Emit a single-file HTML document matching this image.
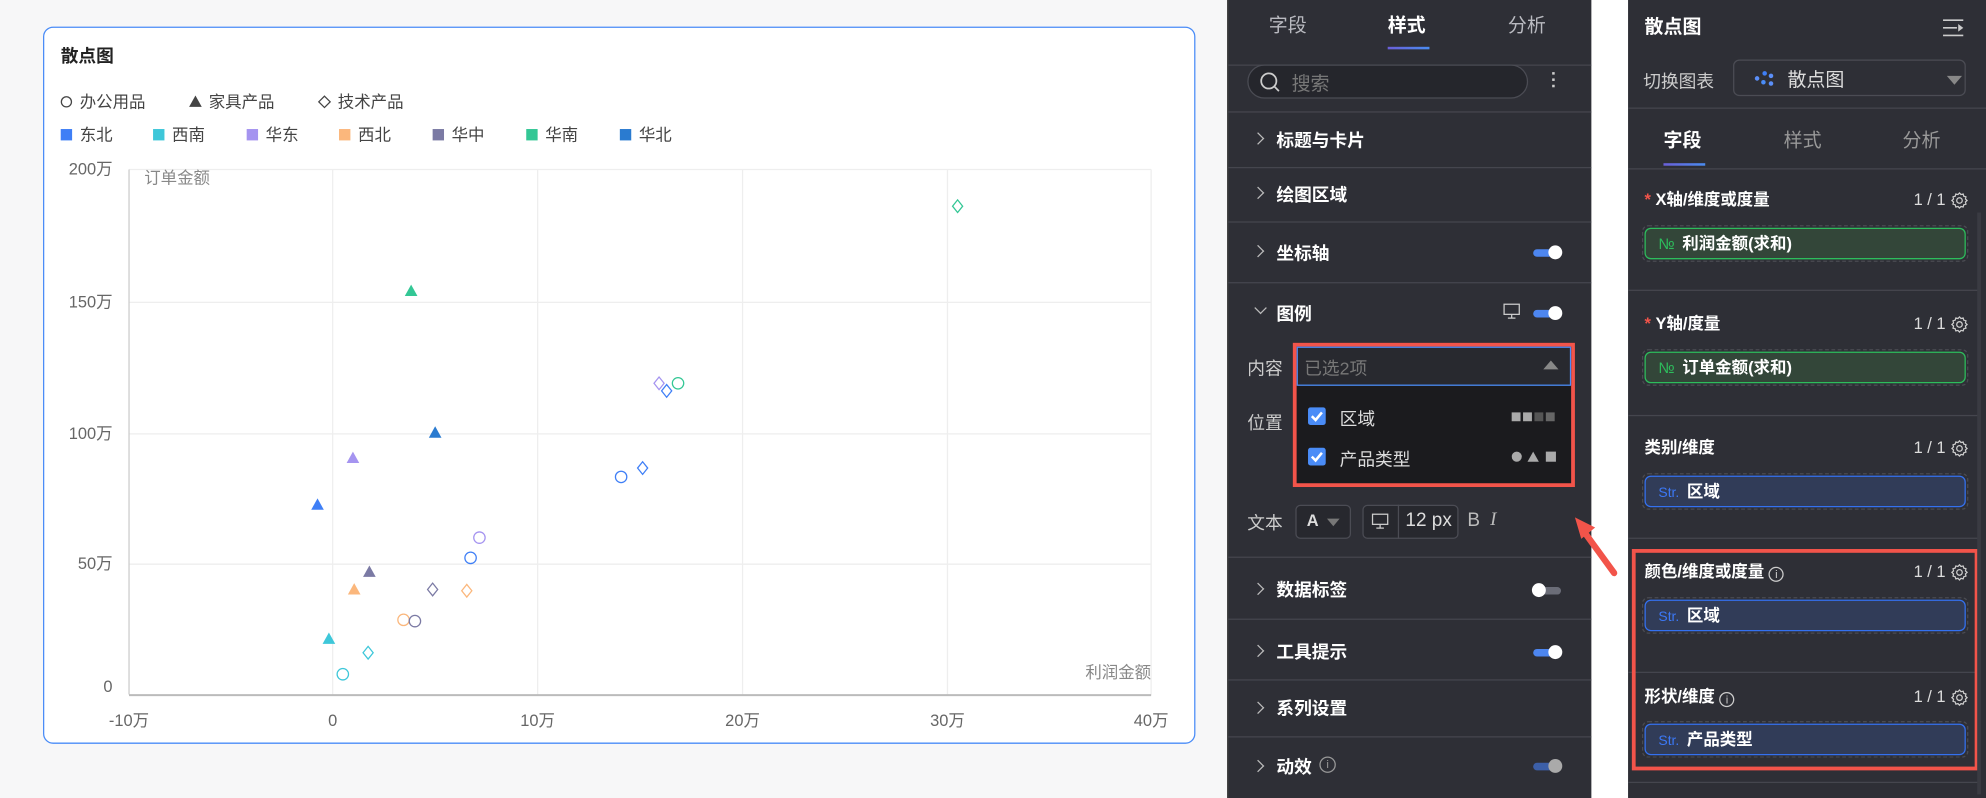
<!DOCTYPE html>
<html><head><meta charset="utf-8">
<style>
*{box-sizing:border-box;margin:0;padding:0}
html,body{width:1986px;height:798px;overflow:hidden;background:#fff}
body{font-family:"Liberation Sans","Noto Sans CJK SC",sans-serif}
#w{position:absolute;left:0;top:0;width:1570px;height:631px;transform:scale(1.265);transform-origin:0 0}
.a{position:absolute}
.lt{background:#f7f7f8;left:0;top:0;width:970px;height:631px}
.card{left:34px;top:21px;width:911px;height:567px;background:#fff;border:1px solid #4a8cf7;border-radius:8px}
.t{color:#222;font-size:14px;font-weight:bold}
.lg{font-size:13px;color:#444;white-space:nowrap}
.sq{display:inline-block;width:9px;height:9px;margin-right:6px;vertical-align:0}
.mid{left:970px;top:0;width:288px;height:631px;background:#2e2f36;border-left:1px solid #444}
.rt{left:1287px;top:0;width:283px;height:631px;background:#2e2f36}
.hl{position:absolute;left:0;right:0;height:1px;background:#45464e}
.wt{color:#fff;font-size:14px;font-weight:bold}
.gt{color:#b9bac0;font-size:14px}
.chev{position:absolute;left:20px;width:7px;height:7px;border-right:1.3px solid #bbb;border-top:1.3px solid #bbb;transform:rotate(45deg)}
.tg{position:absolute;width:22px;height:6px;border-radius:3px;background:#4d86f0}
.tg i{position:absolute;right:-1px;top:-3px;width:11px;height:11px;border-radius:50%;background:#fff}
.fb{position:absolute;left:11px;width:258px;height:29px;border:1px dashed #4a4b52;border-radius:5px}
.fb div{position:absolute;left:1px;top:1px;right:1px;bottom:1px;border-radius:5px;font-size:13px;color:#fff;padding-left:10px;line-height:24px;font-weight:bold}
.g{background:#334639;border:1px solid #2dbd5c}
.b{background:#313c58;border:1px solid #3471f0}
.st{color:#3c78f5;font-size:11px;font-weight:normal;margin-right:6px}
.no{color:#2dbd5c;font-size:12px;font-weight:normal;margin-right:6px}
.hd{position:absolute;left:13px;right:14px;height:18px;line-height:18px;font-size:13px;color:#fff;font-weight:bold}
.hd .r{position:absolute;right:18px;top:0;font-weight:normal;color:#ddd}
.hd svg{position:absolute;right:0;top:2px}
</style></head><body>
<div id="w">
<div class="a lt"></div>
<div class="a card">
 <div class="a t" style="left:13px;top:12px">散点图</div>
 <div class="a lg" style="left:13px;top:48px"><span style="display:inline-block;width:9px;height:9px;border:1px solid #444;border-radius:50%;margin-right:6px"></span>办公用品</div>
 <div class="a lg" style="left:114px;top:48px"><svg width="11" height="10" style="margin-right:5px"><path d="M5.5 0.5l5 9h-10z" fill="#444"/></svg>家具产品</div>
 <div class="a lg" style="left:216px;top:48px"><svg width="11" height="11" style="margin-right:5px;vertical-align:-1px"><path d="M5.5 1l4.5 4.5-4.5 4.5-4.5-4.5z" fill="none" stroke="#444"/></svg>技术产品</div>
 <div class="a lg" style="left:13px;top:74px"><span class="sq" style="background:#3f7ff6"></span>东北</div>
 <div class="a lg" style="left:86px;top:74px"><span class="sq" style="background:#3ec7d9"></span>西南</div>
 <div class="a lg" style="left:160px;top:74px"><span class="sq" style="background:#a594f0"></span>华东</div>
 <div class="a lg" style="left:233px;top:74px"><span class="sq" style="background:#fbb77c"></span>西北</div>
 <div class="a lg" style="left:307px;top:74px"><span class="sq" style="background:#7b7aa4"></span>华中</div>
 <div class="a lg" style="left:381px;top:74px"><span class="sq" style="background:#33c795"></span>华南</div>
 <div class="a lg" style="left:455px;top:74px"><span class="sq" style="background:#2a7bd0"></span>华北</div>
</div>
<svg class="a" style="left:0;top:0" width="970" height="631">
 <g stroke="#eee" stroke-width="1">
  <line x1="102" y1="134" x2="910" y2="134"/><line x1="102" y1="239" x2="910" y2="239"/><line x1="102" y1="343" x2="910" y2="343"/><line x1="102" y1="446" x2="910" y2="446"/>
  <line x1="263" y1="134" x2="263" y2="549"/><line x1="425" y1="134" x2="425" y2="549"/><line x1="587" y1="134" x2="587" y2="549"/><line x1="749" y1="134" x2="749" y2="549"/><line x1="910" y1="134" x2="910" y2="549"/>
 </g>
 <line x1="102" y1="134" x2="102" y2="549" stroke="#ccc"/>
 <line x1="102" y1="549.5" x2="910" y2="549.5" stroke="#bbb" stroke-width="1.5"/>
 <g font-family="Liberation Sans,Noto Sans CJK SC,sans-serif" font-size="13" fill="#666">
  <text x="89" y="138" text-anchor="end">200万</text><text x="89" y="243" text-anchor="end">150万</text><text x="89" y="347" text-anchor="end">100万</text><text x="89" y="450" text-anchor="end">50万</text><text x="89" y="547" text-anchor="end">0</text>
  <text x="102" y="574" text-anchor="middle">-10万</text><text x="263" y="574" text-anchor="middle">0</text><text x="425" y="574" text-anchor="middle">10万</text><text x="587" y="574" text-anchor="middle">20万</text><text x="749" y="574" text-anchor="middle">30万</text><text x="910" y="574" text-anchor="middle">40万</text>
  <text x="114" y="145" fill="#888" font-size="13">订单金额</text><text x="910" y="536" text-anchor="end" fill="#888" font-size="13">利润金额</text>
 </g>
 <g fill="none" stroke-width="1">
  <path d="M757 158l4 5-4 5-4-5z" stroke="#33c795"/>
  <path d="M521 298l4 5-4 5-4-5z" stroke="#a594f0"/>
  <circle cx="536" cy="303" r="4.5" stroke="#33c795"/>
  <path d="M527 304l4 5-4 5-4-5z" stroke="#3f7ff6"/>
  <circle cx="491" cy="377" r="4.5" stroke="#3f7ff6"/>
  <path d="M508 365l4 5-4 5-4-5z" stroke="#3f7ff6"/>
  <circle cx="379" cy="425" r="4.5" stroke="#a594f0"/>
  <circle cx="372" cy="441" r="4.5" stroke="#3f7ff6"/>
  <path d="M342 461l4 5-4 5-4-5z" stroke="#7b7aa4"/>
  <path d="M369 462l4 5-4 5-4-5z" stroke="#fbb77c"/>
  <circle cx="319" cy="490" r="4.5" stroke="#fbb77c"/>
  <circle cx="328" cy="491" r="4.5" stroke="#7b7aa4"/>
  <path d="M291 511l4 5-4 5-4-5z" stroke="#3ec7d9"/>
  <circle cx="271" cy="533" r="4.5" stroke="#3ec7d9"/>
 </g>
 <g>
  <path d="M325 225l5 9h-10z" fill="#33c795"/>
  <path d="M344 337l5 9h-10z" fill="#2a7bd0"/>
  <path d="M279 357l5 9h-10z" fill="#a594f0"/>
  <path d="M251 394l5 9h-10z" fill="#3f7ff6"/>
  <path d="M292 447l5 9h-10z" fill="#7b7aa4"/>
  <path d="M280 461l5 9h-10z" fill="#fbb77c"/>
  <path d="M260 500l5 9h-10z" fill="#3ec7d9"/>
 </g>
</svg>

<div class="a mid">
 <div class="a gt" style="left:32px;top:9px;font-size:15px">字段</div>
 <div class="a wt" style="left:126px;top:9px;font-size:15px">样式</div>
 <div class="a gt" style="left:221px;top:9px;font-size:15px">分析</div>
 <div class="a" style="left:126px;top:37px;width:33px;height:2px;background:linear-gradient(90deg,#6a5fd8,#4a8cf0)"></div>
 <div class="hl" style="top:51px"></div>
 <div class="a" style="left:15px;top:51px;width:222px;height:27px;border:1px solid #4b4c54;border-radius:14px;background:#25262c"></div>
 <svg class="a" style="left:24px;top:56px" width="18" height="18"><circle cx="8" cy="8" r="6" fill="none" stroke="#ccc" stroke-width="1.4"/><line x1="12.5" y1="12.5" x2="16" y2="16" stroke="#ccc" stroke-width="1.4"/></svg>
 <div class="a" style="left:50px;top:55px;color:#777;font-size:15px">搜索</div>
 <div class="a" style="left:256px;top:57px;width:2px;height:2px;background:#ccc;box-shadow:0 5px #ccc,0 10px #ccc"></div>
 <div class="hl" style="top:88px"></div>
 <div class="chev" style="top:106px"></div><div class="a wt" style="left:38px;top:101px">标题与卡片</div>
 <div class="hl" style="top:132px"></div>
 <div class="chev" style="top:149px"></div><div class="a wt" style="left:38px;top:144px">绘图区域</div>
 <div class="hl" style="top:175px"></div>
 <div class="chev" style="top:195px"></div><div class="a wt" style="left:38px;top:190px">坐标轴</div>
 <div class="tg" style="left:241px;top:197px"><i></i></div>
 <div class="hl" style="top:223px"></div>
 <div class="a" style="left:22px;top:240px;width:7px;height:7px;border-right:1.3px solid #bbb;border-bottom:1.3px solid #bbb;transform:rotate(45deg)"></div>
 <div class="a wt" style="left:38px;top:238px">图例</div>
 <svg class="a" style="left:217px;top:239px" width="14" height="14"><rect x="1" y="1.5" width="12" height="8" fill="none" stroke="#ccc"/><line x1="7" y1="9.5" x2="7" y2="12" stroke="#ccc"/><line x1="4" y1="12.5" x2="10" y2="12.5" stroke="#ccc"/></svg>
 <div class="tg" style="left:241px;top:245px"><i></i></div>
 <div class="a gt" style="left:15px;top:281px;color:#ccc">内容</div>
 <div class="a gt" style="left:15px;top:324px;color:#ccc">位置</div>
 <div class="a" style="left:55px;top:358px;width:201px;height:26px;border:1px solid #4b4c54;border-radius:4px"></div>
 <div class="a gt" style="left:15px;top:403px;color:#ccc">文本</div>
 <div class="a" style="left:53px;top:399px;width:44px;height:27px;border:1px solid #4b4c54;border-radius:4px;background:#27282e"></div>
 <div class="a" style="left:62px;top:404px;color:#ddd;font-size:13px;font-weight:bold">A</div>
 <div class="a" style="left:78px;top:410px;border-left:5px solid transparent;border-right:5px solid transparent;border-top:6px solid #777"></div>
 <div class="a" style="left:106px;top:399px;width:76px;height:27px;border:1px solid #4b4c54;border-radius:4px;background:#27282e"></div>
 <div class="a" style="left:134px;top:399px;width:1px;height:27px;background:#4b4c54"></div>
 <svg class="a" style="left:113px;top:405px" width="14" height="14"><rect x="1" y="1.5" width="12" height="8" fill="none" stroke="#ccc"/><line x1="7" y1="9.5" x2="7" y2="12" stroke="#ccc"/><line x1="4" y1="12.5" x2="10" y2="12.5" stroke="#ccc"/></svg>
 <div class="a" style="left:140px;top:403px;color:#ddd;font-size:15px">12 px</div>
 <div class="a" style="left:189px;top:403px;color:#bbb;font-size:15px">B</div>
 <div class="a" style="left:207px;top:403px;color:#bbb;font-size:15px;font-style:italic;font-family:'Liberation Serif',serif">I</div>
 <div class="hl" style="top:440px"></div>
 <div class="chev" style="top:462px"></div><div class="a wt" style="left:38px;top:456px">数据标签</div>
 <div class="tg" style="left:241px;top:464px;background:#6b6d78"><i style="left:-1px;right:auto"></i></div>
 <div class="hl" style="top:489px"></div>
 <div class="chev" style="top:511px"></div><div class="a wt" style="left:38px;top:505px">工具提示</div>
 <div class="tg" style="left:241px;top:513px"><i></i></div>
 <div class="hl" style="top:537px"></div>
 <div class="chev" style="top:556px"></div><div class="a wt" style="left:38px;top:550px">系列设置</div>
 <div class="hl" style="top:582px"></div>
 <div class="chev" style="top:602px"></div><div class="a wt" style="left:38px;top:596px">动效</div>
 <div class="a" style="left:72px;top:598px;width:13px;height:13px;border:1px solid #999;border-radius:50%;color:#999;font-size:9px;text-align:center;line-height:11px">i</div>
 <div class="tg" style="left:241px;top:603px;background:#3c5fa8"><i style="background:#aaa"></i></div>
 <div class="a" style="left:51px;top:271px;width:223px;height:114px;border:3px solid #f2544a;background:#1b1b1e"></div>
 <div class="a" style="left:54px;top:274px;width:217px;height:31px;border:1px solid #4a8cf7;background:#28292f"></div>
 <div class="a" style="left:60px;top:281px;color:#777;font-size:14px">已选2项</div>
 <div class="a" style="left:249px;top:285px;border-left:6px solid transparent;border-right:6px solid transparent;border-bottom:7px solid #888"></div>
 <div class="a" style="left:63px;top:322px;width:14px;height:14px;border-radius:2px;background:#4a8cf7"></div>
 <svg class="a" style="left:63px;top:322px" width="14" height="14"><path d="M3 7l3 3 5-6" stroke="#fff" stroke-width="2" fill="none"/></svg>
 <div class="a" style="left:88px;top:321px;color:#ddd;font-size:14px">区域</div>
 <div class="a" style="left:224px;top:326px;width:7px;height:7px;background:#aaa;box-shadow:9px 0 #aaa,18px 0 #555,27px 0 #666"></div>
 <div class="a" style="left:63px;top:354px;width:14px;height:14px;border-radius:2px;background:#4a8cf7"></div>
 <svg class="a" style="left:63px;top:354px" width="14" height="14"><path d="M3 7l3 3 5-6" stroke="#fff" stroke-width="2" fill="none"/></svg>
 <div class="a" style="left:88px;top:353px;color:#ddd;font-size:14px">产品类型</div>
 <svg class="a" style="left:224px;top:356px" width="40" height="10"><circle cx="4" cy="5" r="4" fill="#aaa"/><path d="M17 1l4.5 8h-9z" fill="#aaa"/><rect x="27" y="1" width="8" height="8" fill="#aaa"/></svg>
</div>
<svg class="a" style="left:1238px;top:400px" width="50" height="62"><line x1="38" y1="53" x2="14" y2="20" stroke="#f2544a" stroke-width="5" stroke-linecap="round"/><path d="M7 9l16 8-11 9z" fill="#f2544a"/></svg>

<svg width="0" height="0" style="position:absolute"><defs><g id="gear"><path d="M7 1.5l1.2 1.3 1.7-.4.5 1.7 1.7.5-.4 1.7L13 7.5l-1.3 1.2.4 1.7-1.7.5-.5 1.7-1.7-.4L7 13.5l-1.2-1.3-1.7.4-.5-1.7-1.7-.5.4-1.7L1 7.5l1.3-1.2-.4-1.7 1.7-.5.5-1.7 1.7.4z" fill="none" stroke="#ccc" stroke-width="1"/><circle cx="7" cy="7.5" r="2.2" fill="none" stroke="#ccc"/></g></defs></svg>
<div class="a rt">
 <div class="a wt" style="left:13px;top:10px;font-size:15px">散点图</div>
 <svg class="a" style="left:248px;top:14px" width="18" height="16"><g stroke="#ccc" stroke-width="1.3"><line x1="1" y1="2" x2="17" y2="2"/><line x1="1" y1="8" x2="12" y2="8"/><line x1="1" y1="14" x2="17" y2="14"/></g><path d="M13 5l4 3-4 3z" fill="#ccc"/></svg>
 <div class="a gt" style="left:12px;top:54px;color:#ccc">切换图表</div>
 <div class="a" style="left:83px;top:47px;width:184px;height:29px;border:1px solid #4b4c54;border-radius:5px"></div>
 <svg class="a" style="left:99px;top:56px" width="20" height="14"><circle cx="3" cy="6" r="1.8" fill="#5b8ff9"/><circle cx="9" cy="2" r="1.8" fill="#3f7ff6"/><circle cx="14" cy="4" r="1.8" fill="#5b8ff9"/><circle cx="8" cy="9" r="1.8" fill="#4a8cf7"/><circle cx="14" cy="10" r="1.8" fill="#5b8ff9"/></svg>
 <div class="a" style="left:126px;top:52px;color:#ddd;font-size:15px">散点图</div>
 <div class="a" style="left:252px;top:60px;border-left:6px solid transparent;border-right:6px solid transparent;border-top:7px solid #888"></div>
 <div class="hl" style="top:85px"></div>
 <div class="a wt" style="left:28px;top:100px;font-size:15px">字段</div>
 <div class="a gt" style="left:123px;top:100px;font-size:15px;color:#999">样式</div>
 <div class="a gt" style="left:217px;top:100px;font-size:15px;color:#999">分析</div>
 <div class="a" style="left:28px;top:129px;width:33px;height:2px;background:linear-gradient(90deg,#6a5fd8,#4a8cf0)"></div>
 <div class="hl" style="top:133px"></div>
 <div class="hd" style="top:149px"><span style="color:#f2544a">*</span>&nbsp;X轴/维度或度量<span class="r">1 / 1</span><svg width="14" height="15"><use href="#gear"/></svg></div>
 <div class="fb" style="top:178px"><div class="g"><span class="no">№</span>利润金额(求和)</div></div>
 <div class="hl" style="top:229px;right:4px"></div>
 <div class="hd" style="top:247px"><span style="color:#f2544a">*</span>&nbsp;Y轴/度量<span class="r">1 / 1</span><svg width="14" height="15"><use href="#gear"/></svg></div>
 <div class="fb" style="top:276px"><div class="g"><span class="no">№</span>订单金额(求和)</div></div>
 <div class="hl" style="top:328px;right:4px"></div>
 <div class="hd" style="top:345px">类别/维度<span class="r">1 / 1</span><svg width="14" height="15"><use href="#gear"/></svg></div>
 <div class="fb" style="top:374px"><div class="b"><span class="st">Str.</span>区域</div></div>
 <div class="hl" style="top:425px;right:4px"></div>
 <div class="hd" style="top:443px">颜色/维度或度量 <span style="display:inline-block;width:12px;height:12px;border:1px solid #ccc;border-radius:50%;font-size:9px;text-align:center;line-height:10px;font-weight:normal;color:#ccc;vertical-align:-1px">i</span><span class="r">1 / 1</span><svg width="14" height="15"><use href="#gear"/></svg></div>
 <div class="fb" style="top:472px"><div class="b"><span class="st">Str.</span>区域</div></div>
 <div class="hl" style="top:531px;right:4px"></div>
 <div class="hd" style="top:542px">形状/维度 <span style="display:inline-block;width:12px;height:12px;border:1px solid #ccc;border-radius:50%;font-size:9px;text-align:center;line-height:10px;font-weight:normal;color:#ccc;vertical-align:-1px">i</span><span class="r">1 / 1</span><svg width="14" height="15"><use href="#gear"/></svg></div>
 <div class="fb" style="top:570px"><div class="b"><span class="st">Str.</span>产品类型</div></div>
 <div class="hl" style="top:618px;right:4px"></div>
 <div class="a" style="left:3px;top:434px;width:274px;height:175px;border:3px solid #f2544a"></div>
 <div class="a" style="left:276px;top:168px;width:3px;height:460px;background:#3a3b42"></div>
</div>
</div>
</body></html>
